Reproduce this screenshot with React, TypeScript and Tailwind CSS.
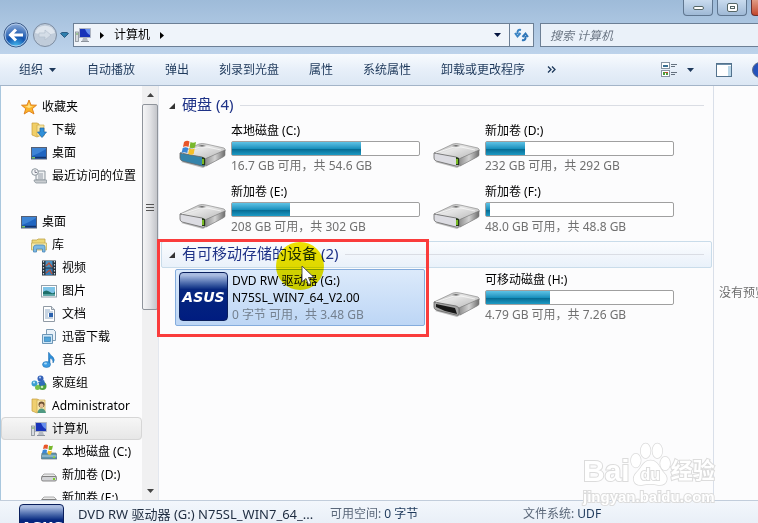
import type { ReactNode } from 'react'

function DriveIcon({ kind }: { kind?: string }) {
  return (
    <svg width="48" height="27" viewBox="0 0 48 27" aria-hidden="true">
      <defs>
        <linearGradient id="driveTop" x1="0" y1="0" x2="1" y2="1">
          <stop offset="0" stopColor="#9c9c9c" />
          <stop offset="0.4" stopColor="#e6e6e6" />
          <stop offset="1" stopColor="#b5b5b5" />
        </linearGradient>
        <linearGradient id="driveSide" x1="0" y1="0" x2="1" y2="0">
          <stop offset="0" stopColor="#8c8c8c" />
          <stop offset="0.5" stopColor="#d2d2d2" />
          <stop offset="1" stopColor="#6d6d6d" />
        </linearGradient>
      </defs>
      <path d="M2 20 L24 26 L46 14 L44 11 Z" fill="#000" opacity="0.25" />
      <path d="M1 11 L20 2 Q23 1 27 2 L45 6 Q47 7 46 9 L26 17 Z" fill="url(#driveTop)" stroke="#8c8c8c" strokeWidth="0.7" />
      <path d="M26 17 L46 8 V13 Q46 14 44 15 L27 24 Z" fill="url(#driveSide)" stroke="#7a7a7a" strokeWidth="0.6" />
      <path
        d="M1 11 L23 15 Q26 16 26 18 V23 Q26 25 23 24 L3 19 Q1 18 1 16 Z"
        fill={kind === 'system' ? '#3584ab' : kind === 'usb' ? '#a5a5a5' : '#dcdce2'}
        stroke="#666"
        strokeWidth="0.8"
      />
      <path d="M19 4 L23 3 L27 4 L23 5 Z" fill="#666" />
      <path d="M3 11 L21 5 L28 5 L42 8" stroke="#fff" strokeWidth="0.8" fill="none" opacity="0.8" />
      {kind === 'usb' ? (
        <path d="M3 13 L22 17 L24 23 L12 20 L3 16 Z" fill="#171717" />
      ) : (
        <>
          <path d="M23 15 L26 16 V23 L23 23 Z" fill="#253a18" />
          <path d="M24 17 V22" stroke="#8edb2a" strokeWidth="1.6" />
        </>
      )}
    </svg>
  )
}

function WindowsFlag({ className }: { className?: string }) {
  return (
    <svg className={className} width="16" height="15" viewBox="0 0 16 15" aria-hidden="true">
      <path d="M3 2 Q6 0 8.500 1.500 L7.500 7 Q5 5.500 2 7 Z" fill="#e8562a" />
      <path d="M9.500 2 Q12 3.500 15 2 L14 7.500 Q11 9 8.500 7.500 Z" fill="#79b82c" />
      <path d="M1.700 8 Q4.500 6.500 7.200 8 L6.200 13 Q3.500 11.500 0.600 13 Z" fill="#3a87d6" />
      <path d="M8.300 8.500 Q11 10 13.700 8.500 L12.700 14 Q10 15.500 7.200 13.700 Z" fill="#f6bf27" />
    </svg>
  )
}

const icons: Record<string, ReactNode> = {
  star: (
    <>
      <path d="M8 1 L10 6 L15.500 6.200 L11.300 9.700 L13 15 L8 12 L3.200 15 L4.700 9.700 L0.500 6.200 L6 6 Z" fill="#fbb42c" stroke="#dd7c16" strokeWidth="0.9" />
      <path d="M8 3.500 L9 7 L12 7.500 L8 9 L4 7.500 L7 7 Z" fill="#ffe38a" />
    </>
  ),
  downloads: (
    <>
      <path d="M1 1 H6 L8 2 V14 L6 15 L1 13 Z" fill="#f1cf68" stroke="#c59c39" strokeWidth="0.7" />
      <path d="M6 3 H13 V14 H6 Z" fill="#f8e5a0" stroke="#cba94c" strokeWidth="0.7" />
      <path d="M9 6 H13 V10 H15.500 L11 15.500 L6.500 10 H9 Z" fill="#2f8fd8" stroke="#1a63ab" strokeWidth="0.7" />
    </>
  ),
  desktop: (
    <>
      <rect x="0.500" y="2.500" width="15" height="11.500" fill="#2065c0" stroke="#555f73" />
      <path d="M1 11 Q7 9 15 4 V3 H1 Z" fill="#4a92de" opacity="0.7" />
      <path d="M1 12.500 H15" stroke="#12336d" strokeWidth="1.500" />
      <rect x="1" y="12" width="3" height="1.500" fill="#79c35c" />
    </>
  ),
  recent: (
    <>
      <path d="M5 3 H14 V12 H5 Z" fill="#eef0f2" stroke="#8c959d" />
      <path d="M7 6 H12 M7 8 H12 M7 10 H12" stroke="#7b8792" strokeWidth="0.8" />
      <path d="M3 12 H15.500 V15 H5 Q3 14 3 12 Z" fill="#c9cdd1" stroke="#8c959d" strokeWidth="0.8" />
      <circle cx="4" cy="4" r="3.300" fill="#f3f5f7" stroke="#8c959d" />
      <path d="M4 2 V4.500 H6" stroke="#667" strokeWidth="0.8" fill="none" />
    </>
  ),
  library: (
    <>
      <path d="M1 3 H6 L7 2 H14 V12 H1 Z" fill="#ecd878" stroke="#bfa348" strokeWidth="0.8" />
      <path d="M0.500 6 H15.500 V13 H0.500 Z" fill="#f5e9a8" stroke="#c7af58" strokeWidth="0.8" />
      <path d="M2.500 15 V10 Q3 8 5 8 H12 Q14 8 14 10 V15 H11.500 V12 H5.500 V15 Z" fill="#7cb9e4" stroke="#4a87b6" strokeWidth="0.8" />
    </>
  ),
  video: (
    <>
      <rect x="1" y="0.500" width="14" height="15" fill="#27313b" />
      <path d="M2.500 1 V15 M13.500 1 V15" stroke="#cbd5dd" strokeWidth="1.200" strokeDasharray="1.500 1.500" />
      <rect x="4.500" y="1" width="7" height="6.500" fill="#4993c6" />
      <rect x="4.500" y="8.500" width="7" height="6.500" fill="#327ebb" />
      <path d="M5 6 L8 3 L11 7 M5 13 L9 10 L11 14" stroke="#b5533b" strokeWidth="1.400" fill="none" />
    </>
  ),
  pictures: (
    <>
      <rect x="0.500" y="2.500" width="15" height="11.500" fill="#fff" stroke="#93a0ab" />
      <rect x="2" y="4" width="12" height="8.500" fill="#7ec4e8" />
      <path d="M2 9 Q5 6 9 9 T14 8 V12.500 H2 Z" fill="#1e6f6a" />
      <path d="M2 11 H14 V12.500 H2 Z" fill="#53a3a0" />
    </>
  ),
  documents: (
    <>
      <path d="M2.500 0.500 H10.500 L13.500 3.500 V15.500 H2.500 Z" fill="#fff" stroke="#909aa5" />
      <path d="M10.500 0.500 V3.500 H13.500" fill="#dfe6ec" stroke="#909aa5" />
      <path d="M4 4 H9 M4 6 H12 M4 8 H7 M4 10 H7 M4 12 H12" stroke="#8fa9c4" />
      <rect x="8" y="7" width="4" height="4" fill="#2b62ae" />
    </>
  ),
  thunder: (
    <>
      <path d="M5.500 0.500 H12.500 L14.500 2.500 V11.500 H5.500 Z" fill="#eaf2f9" stroke="#7f9cb4" />
      <path d="M1.500 5.500 H11.500 V14.500 H1.500 Z" fill="#cde6f7" stroke="#6d96b6" />
      <rect x="3.500" y="8" width="6" height="4.500" fill="#51a5da" stroke="#387fb5" strokeWidth="0.700" />
    </>
  ),
  music: (
    <>
      <path d="M8 0.500 Q9 3 12 5 Q14.500 8 12 11 Q12.500 7 9 6 V12 H7.500 V0.500 Z" fill="#2e8fd9" stroke="#1966ab" strokeWidth="0.500" />
      <ellipse cx="5.500" cy="12.500" rx="4" ry="3" fill="#3c9ce2" stroke="#1966ab" strokeWidth="0.500" />
      <ellipse cx="4.500" cy="11.500" rx="1.500" ry="1" fill="#a9d9f7" />
    </>
  ),
  homegroup: (
    <>
      <circle cx="9.500" cy="3.500" r="3" fill="#3562b9" />
      <circle cx="3.500" cy="8.500" r="3" fill="#3c9ed1" />
      <circle cx="11.500" cy="11" r="4" fill="#4ca23c" />
      <circle cx="6.500" cy="12.500" r="2.500" fill="#77bf4b" />
      <path d="M7 7 L13 5 L14.500 10 L9 11 Z" fill="#2f6cb9" />
      <circle cx="9" cy="2.500" r="1" fill="#bcd5f4" />
      <circle cx="3" cy="7.500" r="1" fill="#c9ecfa" />
      <circle cx="11" cy="12" r="1.300" fill="#c8ecb3" />
    </>
  ),
  user: (
    <>
      <path d="M1 1 H6 L8 2 V14 L6 15 L1 13 Z" fill="#efcf70" stroke="#c59c39" strokeWidth="0.700" />
      <path d="M6 2 H14 V14 H6 Z" fill="#f9e7a9" stroke="#cba94c" strokeWidth="0.700" />
      <circle cx="10.500" cy="6.500" r="3" fill="#6e5135" />
      <circle cx="10.500" cy="7.500" r="2" fill="#e7bf98" />
      <path d="M6.500 15 Q7 10.500 10.500 10.500 T15 15 Z" fill="#4f9a83" />
    </>
  ),
  computer: (
    <>
      <rect x="0.500" y="5" width="3" height="9.500" fill="#d7dbe0" stroke="#858d96" strokeWidth="0.800" />
      <path d="M1 7 H3" stroke="#64aa48" />
      <path d="M4.500 1.500 H15.500 V10.500 H4.500 Z" fill="#1833b9" stroke="#aeb5c2" />
      <path d="M10 2 H15 V8 Q12 7 10 2 Z" fill="#6890ee" />
      <path d="M8 11 H12 L13 14 H7 Z" fill="#b4bac3" />
      <path d="M6 14.500 H14" stroke="#8c939d" />
    </>
  ),
  system: (
    <>
      <path d="M1 9 H15 L16 12 V15 H0.500 V12 Z" fill="#5d95b0" stroke="#60717c" strokeWidth="0.700" />
      <path d="M1 12 H15.500" stroke="#b6d0dd" />
      <rect x="12" y="12.500" width="2" height="1.500" fill="#87d52d" />
      <path d="M3 1 Q5 0 7 1 L6.500 5 Q4 4 2 5 Z" fill="#e8562a" />
      <path d="M8 1.500 Q10 2.500 12 1.500 L11 5.500 Q9 6.500 7.500 5.500 Z" fill="#79b82c" />
      <path d="M1.800 6 Q4 5 6 6 L5.500 9.500 Q3.500 8.500 1 9.500 Z" fill="#3a87d6" />
      <path d="M7 6.500 Q9 7.500 11 6.500 L10 10.500 Q8 11 6.500 10 Z" fill="#f6bf27" />
    </>
  ),
  drive: (
    <>
      <path d="M3 7 H13 L15.500 9.500 H0.500 Z" fill="#e8e8e8" stroke="#8d8d8d" strokeWidth="0.700" />
      <rect x="0.500" y="9.500" width="15" height="4.500" rx="1.500" fill="#d2d3d6" stroke="#707070" strokeWidth="0.800" />
      <rect x="12" y="11" width="2" height="2" fill="#79c92a" />
    </>
  ),
}

function SmallIcon({ name }: { name: string }) {
  return (
    <svg className="shrink-0" width="16" height="16" viewBox="0 0 16 16" aria-hidden="true">
      {icons[name]}
    </svg>
  )
}

const indents = ['pl-5', 'pl-[30px]', 'pl-10']

const favorites = [
  { label: '收藏夹', icon: 'star', level: 0 },
  { label: '下载', icon: 'downloads', level: 1 },
  { label: '桌面', icon: 'desktop', level: 1 },
  { label: '最近访问的位置', icon: 'recent', level: 1 },
]

const tree = [
  { label: '桌面', icon: 'desktop', level: 0 },
  { label: '库', icon: 'library', level: 1 },
  { label: '视频', icon: 'video', level: 2 },
  { label: '图片', icon: 'pictures', level: 2 },
  { label: '文档', icon: 'documents', level: 2 },
  { label: '迅雷下载', icon: 'thunder', level: 2 },
  { label: '音乐', icon: 'music', level: 2 },
  { label: '家庭组', icon: 'homegroup', level: 1 },
  { label: 'Administrator', icon: 'user', level: 1 },
  { label: '计算机', icon: 'computer', level: 1, active: true },
  { label: '本地磁盘 (C:)', icon: 'system', level: 2 },
  { label: '新加卷 (D:)', icon: 'drive', level: 2 },
  { label: '新加卷 (E:)', icon: 'drive', level: 2 },
]

const disks = [
  { name: '本地磁盘 (C:)', info: '16.7 GB 可用，共 54.6 GB', used: 69, kind: 'system' },
  { name: '新加卷 (D:)', info: '232 GB 可用，共 292 GB', used: 21 },
  { name: '新加卷 (E:)', info: '208 GB 可用，共 302 GB', used: 31 },
  { name: '新加卷 (F:)', info: '48.0 GB 可用，共 48.8 GB', used: 2 },
]

const actions = ['自动播放', '弹出', '刻录到光盘', '属性', '系统属性', '卸载或更改程序']

type NavItem = { label: string; icon: string; level: number; active?: boolean }

function NavList({ items }: { items: NavItem[] }) {
  return (
    <ul>
      {items.map((item) => (
        <li key={item.label}>
          <a
            href="#"
            className={`flex h-[23px] items-center gap-[5px] whitespace-nowrap ${indents[item.level]} ${
              item.active ? 'rounded-sm bg-linear-to-b from-[#f7f7f7] to-[#e6e6e6] outline -outline-offset-1 outline-[#d6d6d6]' : ''
            }`}
          >
            <SmallIcon name={item.icon} />
            {item.label}
          </a>
        </li>
      ))}
    </ul>
  )
}

function DiskTile({ name, info, used, kind }: { name: string; info: string; used: number; kind?: string }) {
  return (
    <article className="flex h-[57px] gap-1 pl-1">
      <div className="flex w-12 shrink-0 items-end pb-2">
        <div className="relative h-[27px]">
          <DriveIcon kind={kind} />
          {kind === 'system' && <WindowsFlag className="absolute bottom-[14px] left-0.5" />}
        </div>
      </div>
      <div className="w-[189px] pt-[3px] leading-4">
        <h3>{name}</h3>
        <div
          role="meter"
          aria-label={name}
          aria-valuenow={used}
          className="mt-0.5 mb-0.5 h-[15px] rounded-xs border border-[#a0a0a0] bg-white"
        >
          <div
            className="h-full bg-linear-to-b from-[#5cc3e6] via-[#1991bd] via-50% to-[#1a92bd]"
            style={{ width: `${used}%` }}
          >
            <div className="h-full bg-linear-to-b from-transparent from-50% via-[#066b93] via-55% to-[#1c9ac4]" />
          </div>
        </div>
        <p className="whitespace-nowrap text-[#707070]">{info}</p>
      </div>
    </article>
  )
}

function GroupTitle({ children, hot }: { children: ReactNode; hot?: boolean }) {
  return (
    <div
      className={`mr-px ml-0.5 flex h-[27px] items-center border pr-[7px] pl-[7px] ${
        hot ? 'rounded-xs border-[#c9dcea] bg-linear-to-b from-[#fbfcfe] to-[#e9f1fa]' : 'border-transparent'
      }`}
    >
      <svg width="6" height="6" viewBox="0 0 6 6" aria-hidden="true">
        <path d="M6 0 V6 H0 Z" fill="#333" />
      </svg>
      <h2 className="mr-[7px] ml-[7px] pb-[3px] text-[15px] leading-5 text-[#1e3287]">{children}</h2>
      <span className="h-px flex-1 bg-[#dadde4]" />
    </div>
  )
}

function AsusLogo({ className }: { className: string }) {
  return (
    <div
      className={`flex shrink-0 items-center justify-center overflow-hidden rounded-sm border border-[#0a1f5c] bg-linear-to-b from-[#a9bbe0] from-5% via-[#07277f] via-35% to-[#001c80] font-['DejaVu_Sans',sans-serif] text-sm font-bold text-white italic ${className}`}
    >
      ASUS
    </div>
  )
}

function Caret() {
  return (
    <svg width="7" height="4" viewBox="0 0 7 4" aria-hidden="true">
      <path d="M0 0 H7 L3.500 4 Z" fill="currentColor" />
    </svg>
  )
}

function Crumb() {
  return (
    <svg width="4" height="7" viewBox="0 0 4 7" aria-hidden="true">
      <path d="M0 0 L4 3.500 L0 7 Z" fill="#000" />
    </svg>
  )
}

function Watermark() {
  return (
    <div
      aria-hidden="true"
      className="pointer-events-none absolute right-10 bottom-4 w-[135px] font-['Liberation_Sans','Noto_Sans_CJK_SC',sans-serif] font-bold text-white [paint-order:stroke] [-webkit-text-stroke:2px_#dcdcdc]"
    >
      <div className="flex items-end">
        <span className="text-[30px] leading-8">Bai</span>
        <div className="relative">
          <svg width="41" height="45" viewBox="0 0 42 46" fill="#fff" stroke="#dcdcdc" strokeWidth="1.500">
            <ellipse cx="6" cy="19" rx="5" ry="7" />
            <ellipse cx="16" cy="9" rx="5" ry="7.500" />
            <ellipse cx="28" cy="9" rx="5" ry="7.500" />
            <ellipse cx="36" cy="22" rx="5" ry="7" />
            <path d="M21 19 C13 19 12 27 7 31 C1 37 4 45 12 44 Q21 42 29 44 C38 45 40 37 35 32 C30 27 29 19 21 19 Z" />
          </svg>
          <span className="absolute inset-x-0 bottom-0.5 text-center text-base leading-5">du</span>
        </div>
        <span className="text-[22px] leading-8">经验</span>
      </div>
      <div className="text-[15px] leading-5">jingyan.baidu.com</div>
    </div>
  )
}

export default function App() {
  return (
    <div className="flex h-screen flex-col overflow-hidden bg-[#b6cde7] font-['Noto_Sans','Noto_Sans_CJK_SC',sans-serif] text-xs text-black">
      <header className="bg-linear-to-b from-[#9ebbd9] to-[#bdd3eb]">
        <div className="flex h-[22px] items-start justify-end gap-1 overflow-hidden pl-4">
          <button aria-label="最小化" className="flex h-4 w-[30px] items-center justify-center rounded-b-sm border border-t-0 border-[#5f7690] bg-linear-to-b from-[#c9dbee] to-[#9fb9d6]">
            <span className="h-1 w-[11px] rounded-xs border border-[#566] bg-white" />
          </button>
          <button aria-label="最大化" className="flex h-4 w-[30px] items-center justify-center rounded-b-sm border border-t-0 border-[#5f7690] bg-linear-to-b from-[#c9dbee] to-[#9fb9d6]">
            <span className="flex h-[9px] w-[11px] items-center justify-center rounded-xs border border-[#566] bg-white">
              <span className="h-[3px] w-[5px] border border-[#566]" />
            </span>
          </button>
          <button aria-label="关闭" className="h-4 w-[7px] rounded-bl-sm border border-t-0 border-r-0 border-[#6b3030] bg-linear-to-b from-[#e09a84] to-[#c2452a]" />
        </div>

        <div className="flex h-8 items-start">
          <div className="flex w-[73px] shrink-0 items-center pl-[3px]">
            <button aria-label="后退">
              <svg width="27" height="26" viewBox="0 0 27 26">
                <defs>
                  <radialGradient id="back" cx="0.5" cy="1" r="0.9">
                    <stop offset="0" stopColor="#49c3f5" />
                    <stop offset="0.5" stopColor="#1353ad" />
                    <stop offset="1" stopColor="#7c9fd2" />
                  </radialGradient>
                </defs>
                <circle cx="13" cy="13" r="12" fill="url(#back)" stroke="#3d5a86" />
                <circle cx="13" cy="13" r="11" fill="none" stroke="#c3d8f0" strokeWidth="0.800" />
                <path d="M13 7.500 L7.500 13 L13 18.500 M8 13 H20" stroke="#fff" strokeWidth="3" fill="none" />
              </svg>
            </button>
            <button aria-label="前进" className="ml-0.5">
              <svg width="26" height="26" viewBox="0 0 26 26">
                <circle cx="13" cy="13" r="11.500" fill="#c0ccda" stroke="#7d8da2" />
                <path d="M3 11 A10.500 10.500 0 0 1 23 11 Q13 14 3 11 Z" fill="#dfe6ee" />
                <path d="M19 13 L13 8 V11 H7 V15 H13 V18 Z" fill="#d4dde7" stroke="#b3bfcd" strokeWidth="0.700" />
              </svg>
            </button>
            <button aria-label="最近页面" className="ml-0.5">
              <svg width="9" height="6" viewBox="0 0 9 6">
                <path d="M0.500 1.500 L2 0.500 H7 L8.500 1.500 L4.500 5.500 Z" fill="#2f7fae" stroke="#1b4a72" strokeWidth="0.800" />
              </svg>
            </button>
          </div>
          <div className="mt-px flex h-6 flex-1 items-center border border-[#6c7f95] bg-[#eff4fa] pl-px">
            <SmallIcon name="computer" />
            <span className="w-[9px]" />
            <Crumb />
            <button className="mr-[10px] ml-[10px]">计算机</button>
            <Crumb />
            <button aria-label="展开地址" className="mr-2 ml-auto text-[#051540]"><Caret /></button>
            <button aria-label="刷新" className="flex h-full w-6 items-center justify-center border-l border-[#6c7f95]">
              <svg width="15" height="14" viewBox="0 0 15 14">
                <path d="M7 2 Q3 1 3.500 6 M1 5 L3.500 8.500 L6.500 5" stroke="#3b84c4" strokeWidth="2" fill="none" />
                <path d="M8 12 Q12 13 11.500 8 M8.500 9 L11.500 5.500 L14 9" stroke="#2f76b8" strokeWidth="2" fill="none" />
              </svg>
            </button>
          </div>
          <input
            aria-label="搜索"
            placeholder="搜索 计算机"
            className="mt-px ml-[6px] h-6 w-[218px] shrink-0 border border-r-0 border-[#6c7f95] bg-[#eaf1f9] px-[9px] italic placeholder:text-[#6b7684]"
          />
        </div>
      </header>

      <div className="flex h-8 shrink-0 items-center overflow-hidden border-b border-[#a3b4c8] bg-linear-to-b from-[#f8fbfe] via-[#e7eff9] via-50% to-[#dce7f4] pl-[19px] whitespace-nowrap text-[#1e395b]">
        <button className="mr-[31px] flex items-center gap-[6px]">
          组织 <Caret />
        </button>
        <div className="flex gap-[30px]">
          {actions.map((label) => (
            <button key={label}>{label}</button>
          ))}
        </div>
        <button aria-label="更多" className="ml-[22px]">
          <svg width="9" height="7" viewBox="0 0 9 7">
            <path d="M1 0.500 L4 3.500 L1 6.500 M5 0.500 L8 3.500 L5 6.500" stroke="#1e395b" strokeWidth="1.300" fill="none" />
          </svg>
        </button>
        <div className="ml-auto flex items-center">
          <button aria-label="更改视图" className="flex items-center gap-[10px]">
            <svg width="16" height="15" viewBox="0 0 16 15">
              <rect x="0.500" y="0.500" width="8" height="6" fill="#fff" stroke="#8895a3" />
              <path d="M2 5 V3 H7 V5 Z" fill="#3b6f92" />
              <rect x="0.500" y="8.500" width="8" height="6" fill="#fff" stroke="#8895a3" />
              <path d="M2 10 H4 V13 H2 Z M5 11 H7 V13 H5 Z" fill="#4c9b37" />
              <path d="M4 10 H7 V11 H4 Z" fill="#c44d37" />
              <path d="M10 2.500 H16 M10 4.500 H14 M10 10.500 H16 M10 12.500 H14" stroke="#65717f" />
            </svg>
            <Caret />
          </button>
          <button aria-label="预览窗格" className="ml-[22px]">
            <svg width="16" height="14" viewBox="0 0 16 14">
              <rect x="0.500" y="0.500" width="15" height="13" fill="#fff" stroke="#53728d" />
              <path d="M1 1.500 H15" stroke="#6f8fa9" />
              <path d="M12 3 H15 V13 H12 Z" fill="#b9d6e8" />
            </svg>
          </button>
          <button aria-label="帮助" className="ml-5">
            <svg width="6" height="16" viewBox="0 0 6 16">
              <circle cx="8" cy="8" r="7.500" fill="#2452bb" stroke="#5f6f8a" />
            </svg>
          </button>
        </div>
      </div>

      <div className="flex min-h-0 flex-1 bg-[#fcfcfd]">
        <nav className="w-[142px] shrink-0 overflow-hidden border-l border-[#a9c7de] pt-[9px]">
          <NavList items={favorites} />
          <div className="mt-[23px]">
            <NavList items={tree} />
          </div>
        </nav>
        <div className="flex w-4 shrink-0 flex-col bg-[#f0f0f1]">
          <button aria-label="向上滚动" className="flex h-[18px] items-center justify-center">
            <svg width="7" height="4" viewBox="0 0 7 4">
              <path d="M0 4 H7 L3.500 0 Z" fill="#444" />
            </svg>
          </button>
          <div className="flex h-[206px] flex-col items-center justify-center gap-0.5 rounded-xs border border-[#8f949b] bg-linear-to-r from-[#f5f5f6] via-[#e2e3e6] to-[#c3c5ca]">
            <span className="h-px w-2 bg-[#555]" />
            <span className="h-px w-2 bg-[#555]" />
            <span className="h-px w-2 bg-[#555]" />
          </div>
          <button aria-label="向下滚动" className="mt-auto flex h-[18px] items-center justify-center text-[#444]"><Caret /></button>
        </div>

        <main className="relative min-w-0 flex-1 border-l border-[#e3e7ee] pt-[6px]">
          <section>
            <GroupTitle>硬盘 (4)</GroupTitle>
            <div className="mt-px grid grid-cols-[repeat(auto-fill,250px)] gap-1 pl-4">
              {disks.map((disk) => (
                <DiskTile key={disk.name} {...disk} />
              ))}
            </div>
          </section>

          <section className="relative mt-[3px]">
            <GroupTitle hot>有可移动存储的设备 (2)</GroupTitle>
            <div className="mt-px grid grid-cols-[repeat(auto-fill,250px)] gap-1 pl-4">
              <article className="flex h-[57px] gap-1 rounded-xs border border-[#84acdd] bg-linear-to-b from-[#dceafb] to-[#bdd6f5] pt-0.5 pl-[3px]">
                <AsusLogo className="size-[49px]" />
                <div className="leading-[17px] whitespace-nowrap">
                  <h3>DVD RW 驱动器 (G:)</h3>
                  <p>N75SL_WIN7_64_V2.00</p>
                  <p className="text-[#74808f]">0 字节 可用，共 3.48 GB</p>
                </div>
              </article>
              <DiskTile name="可移动磁盘 (H:)" info="4.79 GB 可用，共 7.26 GB" used={34} kind="usb" />
            </div>

            {/* click highlight, pointer and callout frame */}
            <div className="pointer-events-none absolute top-px left-[117px] size-12 rounded-full bg-[#f3e500] mix-blend-multiply" />
            <svg className="pointer-events-none absolute top-6 left-[142px]" width="14" height="21" viewBox="0 0 14 21" aria-hidden="true">
              <path d="M1 1 V17 L5 13.500 L7.500 19.500 L10 18.500 L7.500 12.500 H13 Z" fill="#fff" stroke="#444" strokeWidth="0.900" />
            </svg>
            <div className="pointer-events-none absolute -top-0.5 -left-0.5 h-[98px] w-[272px] border-3 border-[#fa3c3c]" />
          </section>
        </main>

        <aside className="relative flex w-[45px] shrink-0 items-center border-l border-[#d9dfe9] pl-[5px] text-[#6d6d6d]">
          <p className="w-10 overflow-hidden whitespace-nowrap">没有预览。</p>
        </aside>
      </div>

      <footer className="relative flex h-[23px] shrink-0 items-start border-t border-[#c2cddb] bg-linear-to-b from-[#f3f7fc] to-[#e9eff7] pl-[19px] whitespace-nowrap">
        <AsusLogo className="mt-[3px] h-[45px] w-[45px]" />
        <p className="mt-1 ml-[14px] w-[252px] text-[13px] leading-[18px] text-[#1e2c40]">DVD RW 驱动器 (G:) N75SL_WIN7_64_...</p>
        <p className="mt-1 w-[193px] leading-[18px] text-[#5a6779]">
          可用空间: <span className="text-[#1e395b]">0 字节</span>
        </p>
        <p className="mt-1 leading-[18px] text-[#5a6779]">
          文件系统: <span className="text-[#1e395b]">UDF</span>
        </p>
        <Watermark />
      </footer>
    </div>
  )
}
